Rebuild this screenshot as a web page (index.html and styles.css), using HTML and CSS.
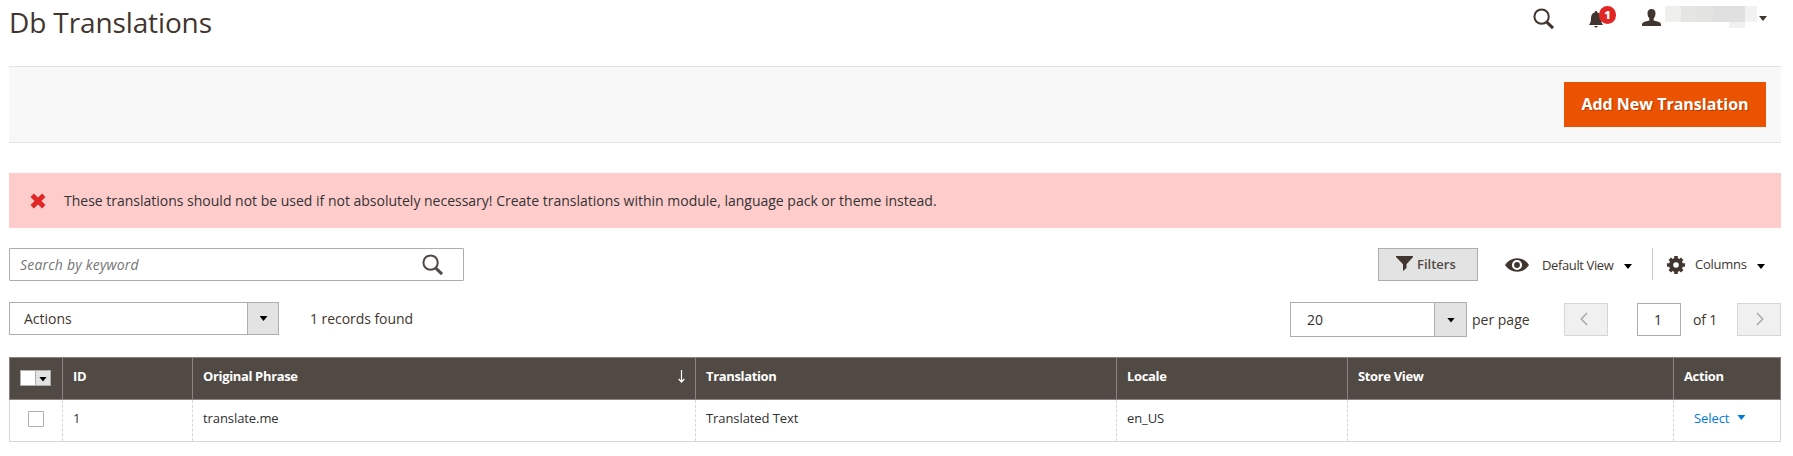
FILE: index.html
```html
<!DOCTYPE html>
<html lang="en">
<head>
<meta charset="utf-8">
<title>Db Translations</title>
<link rel="stylesheet" href="styles.css">
</head>
<body>
<header class="page-header">
  <h1 class="page-title">Db Translations</h1>
  <div class="header-tools">
    <svg class="tool-search" width="22" height="22" viewBox="0 0 22 22"><circle cx="8.6" cy="8.6" r="7.2" fill="none" stroke="#41362f" stroke-width="2"/><path d="M13.8 14.2L20 20.2" stroke="#41362f" stroke-width="3"/></svg>
    <div class="notifications">
      <svg width="14" height="17" viewBox="0 0 14 17"><path d="M7 0C8 0 8.300 .7 8.400 1.400 11 2.200 12 4.500 12 7.500c0 3 .7 4.500 2 6.500H0C1.300 12 2 10.500 2 7.500 2 4.500 3 2.200 5.600 1.400 5.700.7 6 0 7 0zM5.300 15h3.400c-.2 1-.8 1.600-1.700 1.600S5.500 16 5.300 15z" fill="#41362f"/></svg>
      <span class="badge">1</span>
    </div>
    <svg class="tool-user" width="19" height="17" viewBox="0 0 19 17"><path d="M9.500 0c2.800 0 4 1.700 4 4.200 0 2.300-.7 4-1.800 5v2.300c2.600.8 5.200 1.200 6.500 2.300.7.600.8 1.600.8 3.200H0c0-1.600.1-2.600.8-3.200 1.300-1.100 3.900-1.500 6.500-2.300V9.200c-1.100-1-1.800-2.700-1.800-5C5.500 1.700 6.700 0 9.500 0z" fill="#41362f"/></svg>
    <div class="username"><i class="b1"></i><i class="b2"></i><i class="b3"></i><i class="b4"></i><i class="b5"></i><i class="b6"></i></div>
    <span class="caret caret-user"></span>
  </div>
</header>

<div class="page-actions"><button class="primary">Add New Translation</button></div>

<div class="message">
  <svg width="16" height="16" viewBox="0 0 16 16"><path d="M2.200 2.200L13.800 13.800M13.800 2.200L2.200 13.800" stroke="#e22626" stroke-width="4.800" stroke-linecap="butt"/></svg>
  <span>These translations should not be used if not absolutely necessary! Create translations within module, language pack or theme instead.</span>
</div>

<div class="grid-tools">
  <div class="search">
    <span>Search by keyword</span>
    <svg width="22" height="22" viewBox="0 0 22 22"><circle cx="8.600" cy="8.600" r="7.200" fill="none" stroke="#514943" stroke-width="2"/><path d="M13.800 14.200L20 20.200" stroke="#514943" stroke-width="3"/></svg>
  </div>
  <div class="view-tools">
    <button class="filters">
      <svg width="17" height="15" viewBox="0 0 17 15"><path d="M0 0h17v1L10.500 8.300V12L7 15V8.300L0 1z" fill="#41362f"/></svg>
      <span>Filters</span>
    </button>
    <svg class="eye" width="24" height="14" viewBox="0 0 24 14"><path d="M0 7C3 2.500 7 .3 12 .3S21 2.500 24 7c-3 4.500-7 6.700-12 6.700S3 11.500 0 7z" fill="#41362f"/><circle cx="12" cy="7" r="4" fill="none" stroke="#fff" stroke-width="2.200"/></svg>
    <span class="view-label">Default View</span><span class="caret caret-view"></span>
    <span class="divider"></span>
    <svg class="gear" width="18" height="18" viewBox="-9 -9 18 18"><circle r="4.900" fill="none" stroke="#41362f" stroke-width="4.200"/><g stroke="#41362f" stroke-width="3.600"><path d="M0-9V-5M0 9V5M-9 0H-5M9 0H5M-6.200-6.200L-4-4M6.200 6.200L4 4M-6.200 6.200L-4 4M6.200-6.200L4-4"/></g></svg>
    <span class="columns-label">Columns</span><span class="caret caret-columns"></span>
  </div>
</div>

<div class="grid-nav">
  <div class="select actions"><span class="value">Actions</span><span class="arrow"><i class="caret"></i></span></div>
  <span class="records">1 records found</span>
  <div class="pager">
    <div class="select page-size"><span class="value">20</span><span class="arrow"><i class="caret"></i></span></div>
    <span class="per-page">per page</span>
    <button class="page-button"><svg width="8" height="14" viewBox="0 0 8 14"><path d="M7 1L1.300 7 7 13" fill="none" stroke="#aaa6a0" stroke-width="1.500"/></svg></button>
    <span class="page-input">1</span>
    <span class="page-total">of 1</span>
    <button class="page-button"><svg width="8" height="14" viewBox="0 0 8 14"><path d="M1 1L6.700 7 1 13" fill="none" stroke="#aaa6a0" stroke-width="1.500"/></svg></button>
  </div>
</div>

<table class="data-grid">
  <colgroup><col class="c-check"><col class="c-id"><col class="c-phrase"><col class="c-translation"><col class="c-locale"><col class="c-store"><col class="c-action"></colgroup>
  <thead><tr>
    <th><div class="multiselect"><i class="box"></i><span><i class="caret"></i></span></div></th>
    <th>ID</th>
    <th><div class="sorted"><span>Original Phrase</span><svg width="7" height="13" viewBox="0 0 7 13"><path d="M3.500 0V11.500M.7 9L3.500 12 6.300 9" fill="none" stroke="#fff" stroke-width="1.200"/></svg></div></th>
    <th>Translation</th><th>Locale</th><th>Store View</th><th>Action</th>
  </tr></thead>
  <tbody><tr>
    <td><i class="checkbox"></i></td><td>1</td><td>translate.me</td><td>Translated Text</td><td>en_US</td><td></td>
    <td><a class="row-action">Select<i class="caret"></i></a></td>
  </tr></tbody>
</table>
</body>
</html>
```
FILE: styles.css
```css
* { box-sizing: border-box; }
body {
  margin: 0;
  padding: 0 12px 0 9px;
  background: #fff;
  color: #41362f;
  font: 14px/20px "Open Sans", "Noto Sans", sans-serif;
  overflow: hidden;
}
svg { display: block; flex: none; }
button { font: inherit; margin: 0; border-radius: 0; }

.caret {
  display: block;
  flex: none;
  width: 8px;
  height: 5px;
  background: #000;
  clip-path: polygon(0 0, 100% 0, 50% 100%);
}

.page-header { display: flex; justify-content: space-between; align-items: flex-start; height: 66px; }
.page-title { margin: 3px 0 0; font-size: 28px; line-height: 38px; font-weight: 400; letter-spacing: -.12px; }
.header-tools { display: flex; align-items: flex-start; padding-right: 14px; }
.tool-search { margin: 8px 34px 0 0; }
.notifications { position: relative; padding-top: 11px; margin-right: 39px; }
.badge {
  position: absolute;
  left: 10px;
  top: 6px;
  width: 17px;
  height: 18px;
  border-radius: 9px;
  background: #e22626;
  color: #fff;
  font-size: 11px;
  line-height: 18px;
  font-weight: 800;
  text-align: center;
}
.tool-user { margin: 9px 4px 0 0; }
.username { display: grid; grid-template-columns: 16px 16px 16px 16px 16px 12px; grid-template-rows: 16px 6px; padding-top: 6px; }
.b1 { background: #efefed; }
.b2 { background: #e5e5e3; }
.b3 { background: #e3e3e1; }
.b4, .b5 { background: #e0e0e0; }
.b6 { background: #f2f2f2; }
.username::after { content: ""; grid-column: 5; background: #f1f1f1; }
.caret-user { margin: 16px 0 0 2px; background: #41362f; }

.page-actions {
  display: flex;
  justify-content: flex-end;
  height: 77px;
  padding: 15px 15px 0 0;
  background: #f8f8f8;
  border: solid #e3e3e3;
  border-width: 1px 0;
}
.primary {
  width: 202px;
  height: 45px;
  padding: 0 0 1px;
  border: 0;
  background: #eb5202;
  color: #fff;
  font-size: 16px;
  font-weight: 700;
  text-shadow: 1px 1px 0 rgba(0, 0, 0, .25);
  white-space: nowrap;
}

.message {
  display: flex;
  align-items: center;
  gap: 18px;
  height: 55px;
  margin-top: 30px;
  padding-left: 21px;
  background: #ffcccc;
  color: #333;
}
.message span { padding-top: 1px; letter-spacing: -.006px; }

.grid-tools { display: flex; justify-content: space-between; height: 33px; margin-top: 20px; }
.search {
  display: flex;
  justify-content: space-between;
  align-items: center;
  width: 455px;
  padding: 0 19px 0 10px;
  border: 1px solid #adadad;
  border-radius: 1px;
  color: #757575;
  font-style: italic;
}
.search span { letter-spacing: .2px; }
.view-tools { display: flex; align-items: center; padding-right: 16px; font-size: 13px; }
.filters {
  display: flex;
  align-items: center;
  gap: 4px;
  width: 100px;
  height: 33px;
  padding: 0 0 2px 17px;
  border: 1px solid #adadad;
  background: #e3e3e3;
  color: #514943;
  font-weight: 600;
}
.eye { margin: 0 13px 0 27px; }
.view-label { width: 72px; padding-top: 1px; white-space: nowrap; letter-spacing: -.38px; }
.caret-view { margin: 4px 20px 0 10px; }
.divider { width: 1px; height: 32px; margin-bottom: 1px; background: #ccc; }
.gear { margin: 1px 10px 0 14px; }
.columns-label { width: 52px; margin-bottom: 2px; letter-spacing: -.25px; }
.caret-columns { margin: 4px 0 0 10px; }

.grid-nav { display: flex; align-items: flex-start; height: 55px; margin-top: 21px; }
.select { display: flex; border: 1px solid #adadad; }
.value { flex: 1; }
.arrow { display: flex; align-items: center; justify-content: center; width: 32px; border-left: 1px solid #adadad; background: #e3e3e3; }
.actions { width: 270px; height: 33px; }
.actions .value { padding-left: 14px; line-height: 32px; }
.records { margin: 7px 0 0 31px; letter-spacing: -.05px; }
.pager { display: flex; align-items: flex-start; margin-left: auto; }
.page-size { width: 177px; height: 35px; }
.page-size .value { padding-left: 16px; line-height: 34px; color: #303030; }
.page-size .caret { margin-top: 1px; }
.per-page { width: 92px; margin: 8px 0 0 5px; }
.page-button {
  display: flex;
  align-items: center;
  justify-content: center;
  width: 44px;
  height: 33px;
  margin-top: 1px;
  padding: 0 4px 2px 0;
  border: 1px solid #d6d6d6;
  background: #f0f0f0;
}
.page-button:last-child { padding: 0 0 2px 1px; }
.page-input {
  width: 44px;
  height: 33px;
  margin: 1px 12px 0 29px;
  padding-right: 2px;
  border: 1px solid #adadad;
  line-height: 32px;
  text-align: center;
  color: #303030;
}
.page-total { width: 44px; margin-top: 8px; letter-spacing: -.2px; }

.arrow { padding-left: 1px; width: 31px; }
.page-size .arrow { width: 32px; }

.data-grid { width: 1772px; table-layout: fixed; border-collapse: collapse; font-size: 13px; line-height: 18px; color: #303030; }
.c-check { width: 53px; }
.c-id { width: 130px; }
.c-phrase { width: 503px; }
.c-translation { width: 421px; }
.c-locale { width: 231px; }
.c-store { width: 326px; }
.data-grid th {
  height: 42px;
  padding: 0 10px 5px;
  border: 1px solid #8a837f;
  background: #514943;
  color: #fff;
  font-weight: 700;
  letter-spacing: -.35px;
  text-align: left;
}
.data-grid td {
  height: 42px;
  padding: 0 10px 6px;
  border: solid #d6d6d6;
  border-width: 0 1px 1px;
  border-left-style: dashed;
  border-right-style: dashed;
  letter-spacing: -.08px;
}
.data-grid td:first-child { border-left-style: solid; padding: 0 0 4px 18px; }
.data-grid td:last-child { border-right-style: solid; padding-left: 20px; }
.data-grid th:first-child { padding: 0 0 1px 10px; }
.multiselect { display: flex; width: 31px; height: 16px; border: 1px solid #adadad; background: #fff; }
.multiselect .box { flex: 1; }
.multiselect span { display: flex; align-items: center; justify-content: center; width: 15px; border-left: 1px solid #adadad; background: #e3e3e3; }
.multiselect .caret { margin-top: 2px; }
.sorted { display: flex; justify-content: space-between; align-items: center; }
.checkbox { display: block; width: 16px; height: 16px; border: 1px solid #adadad; border-radius: 1px; }
.row-action { display: flex; align-items: center; gap: 8px; color: #007bdb; }
.row-action .caret { background: #007bdb; }
```
